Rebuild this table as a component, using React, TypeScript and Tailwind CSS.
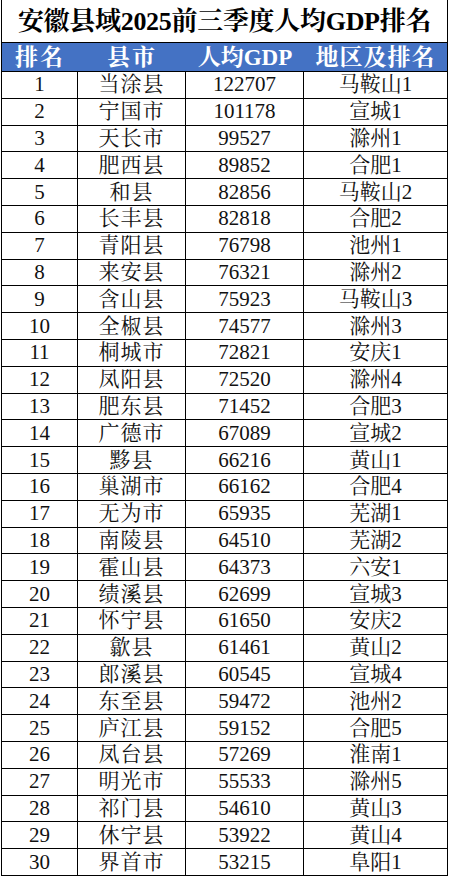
const rows: [string, string, string][] = [
  ["当涂县", "122707", "马鞍山1"],
  ["宁国市", "101178", "宣城1"],
  ["天长市", "99527", "滁州1"],
  ["肥西县", "89852", "合肥1"],
  ["和县", "82856", "马鞍山2"],
  ["长丰县", "82818", "合肥2"],
  ["青阳县", "76798", "池州1"],
  ["来安县", "76321", "滁州2"],
  ["含山县", "75923", "马鞍山3"],
  ["全椒县", "74577", "滁州3"],
  ["桐城市", "72821", "安庆1"],
  ["凤阳县", "72520", "滁州4"],
  ["肥东县", "71452", "合肥3"],
  ["广德市", "67089", "宣城2"],
  ["黟县", "66216", "黄山1"],
  ["巢湖市", "66162", "合肥4"],
  ["无为市", "65935", "芜湖1"],
  ["南陵县", "64510", "芜湖2"],
  ["霍山县", "64373", "六安1"],
  ["绩溪县", "62699", "宣城3"],
  ["怀宁县", "61650", "安庆2"],
  ["歙县", "61461", "黄山2"],
  ["郎溪县", "60545", "宣城4"],
  ["东至县", "59472", "池州2"],
  ["庐江县", "59152", "合肥5"],
  ["凤台县", "57269", "淮南1"],
  ["明光市", "55533", "滁州5"],
  ["祁门县", "54610", "黄山3"],
  ["休宁县", "53922", "黄山4"],
  ["界首市", "53215", "阜阳1"],
];

const font =
  "font-['Liberation_Serif','Noto_Serif_CJK_SC','Noto_Sans_CJK_SC',serif]";

export default function App() {
  return (
    <div className={`h-[880px] w-[450px] bg-white pl-px ${font}`}>
      <div className="w-[447px] border-x border-b border-black">
        <div className="flex h-[43px] items-center justify-center border-b border-black pt-px text-[26px] font-bold leading-none tracking-[-0.3px] text-black">
          安徽县域2025前三季度人均GDP排名
        </div>
        <div className="grid h-[28px] grid-cols-[76px_108px_118px_143px] bg-[#4472c4] text-[23px] font-bold leading-none text-white">
          <div className="flex items-center justify-center tracking-[2px]">排名</div>
          <div className="flex items-center justify-center tracking-[2px]">县市</div>
          <div className="flex items-center justify-center">人均GDP</div>
          <div className="flex items-center justify-center tracking-[1px]">地区及排名</div>
        </div>
        {rows.map(([county, gdp, region], i) => (
          <div
            key={county}
            className="grid h-[26.8px] grid-cols-[76px_108px_118px_143px] border-t border-black text-[21px] leading-none text-[#111]"
          >
            <div className="flex items-center justify-center border-r border-black">
              {i + 1}
            </div>
            <div className="flex items-center justify-center border-r border-black tracking-[1px]">
              {county}
            </div>
            <div className="flex items-center justify-center border-r border-black">
              {gdp}
            </div>
            <div className="flex items-center justify-center">{region}</div>
          </div>
        ))}
      </div>
    </div>
  );
}
